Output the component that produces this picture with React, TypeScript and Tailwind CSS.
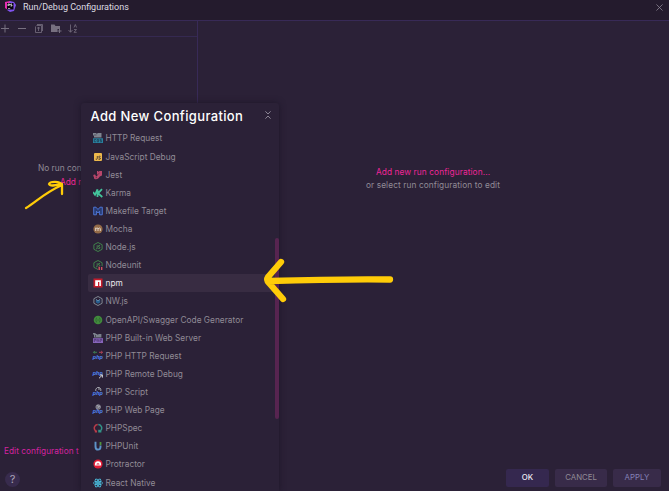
import React from 'react';

const svgBase = 'block h-[10px] w-[10px] shrink-0';

function Php({ children }: { children?: React.ReactNode }) {
  return (
    <svg viewBox="0 0 10 10" className={svgBase + ' overflow-visible'}>
      <text x="-0.2" y="8.4" fontSize="6.2" fontWeight="700" fontStyle="italic" letterSpacing="0" fontFamily="Roboto, sans-serif" fill="#4f80ea">php</text>
      {children}
    </svg>
  );
}

function Hexagon({ color, children }: { color: string; children?: React.ReactNode }) {
  return (
    <svg viewBox="0 0 10 10" className={svgBase}>
      <path d="M5 .5 9.1 2.7V7.3L5 9.5 .9 7.3V2.7Z" fill="none" stroke={color} strokeWidth=".9" />
      {children}
    </svg>
  );
}

const js = (
  <path d="M4.2 3.2V6.4Q4.2 7.1 3 6.8M7 3.5Q5.4 3 5.4 4.1T7 5.4Q7 7 5.2 6.5" fill="none" stroke="#4d9554" strokeWidth=".8" />
);

const items: { name: string; icon: React.ReactNode }[] = [
  {
    name: 'HTTP Request',
    icon: (
      <svg viewBox="0 0 10 10" className={svgBase}>
        <path d="M0 0H3.500V1H4.300V0H8.500V4.600H1V2.500H0Z" fill="#7f8590" />
        <path d="M1 2H3.5" stroke="#3b3447" strokeWidth=".6" />
        <path d="M0 5.3H10V10H0Z" fill="#29809f" />
        <path d="M3 6.5H1.3V8.8H3M4.2 8.8V6.5H5.5V8.8H4.2M8.5 6.5H7V7.6H8.5V8.8H7" fill="none" stroke="#20394e" strokeWidth=".7" />
      </svg>
    ),
  },
  {
    name: 'JavaScript Debug',
    icon: (
      <svg viewBox="0 0 10 10" className={svgBase}>
        <rect x="1" y="1" width="8" height="8" rx="1" fill="#edb84b" />
        <path d="M4.3 4V6.6Q4.3 7.7 2.7 7.1M7.5 4.4Q5.7 3.7 5.7 4.8T7.5 6.3Q7.5 7.8 5.4 7.1" fill="none" stroke="#43352f" strokeWidth=".9" />
      </svg>
    ),
  },
  {
    name: 'Jest',
    icon: (
      <svg viewBox="0 0 10 10" className={svgBase}>
        <path d="M4 1H5.2L5.7 2.2 6.3 1H9V4.8Q9 6.3 7 6.3L5.5 8.2Q4 9.5 2.2 9.2.5 8.8 1 7L2 5.7 3.2 6.6 4.9 5 4 4Z" fill="#b9466b" />
        <path d="M5.2 4.2 6.5 3.1M2.6 7.8 4 7.5" stroke="#472942" strokeWidth=".7" />
        <circle cx="1.5" cy="5.7" r="1.2" fill="#b9466b" />
      </svg>
    ),
  },
  {
    name: 'Karma',
    icon: (
      <svg viewBox="0 0 10 10" className={svgBase}>
        <path d="M0 4 2 6.8 4.5 1.4V9M9 1.2 5 5.3 9.3 9" fill="none" stroke="#43c49b" strokeWidth="1.8" />
      </svg>
    ),
  },
  {
    name: 'Makefile Target',
    icon: (
      <svg viewBox="0 0 10 10" className={svgBase}>
        <path d="M.7 1.2H3L5 3.5 7 1.2H9.3V8.8H6.6V5.2L5 7 3.4 5.2V8.8H.7Z" fill="#283b72" stroke="#507be0" strokeWidth=".9" />
      </svg>
    ),
  },
  {
    name: 'Mocha',
    icon: (
      <svg viewBox="0 0 10 10" className={svgBase}>
        <circle cx="5" cy="5" r="4.6" fill="#946b48" />
        <path d="M2.7 7V3.7M2.7 5Q3.6 3.1 5 4.4V7M5 5Q6.3 3.1 7.3 4.5V7" fill="none" stroke="#dfd1c5" strokeWidth="1" />
      </svg>
    ),
  },
  { name: 'Node.js', icon: <Hexagon color="#438b4e">{js}</Hexagon> },
  {
    name: 'Nodeunit',
    icon: (
      <Hexagon color="#438b4e">
        {js}
        <path d="M5 6.2H10V10H5Z" fill="#2b2137" />
        <path d="M6.2 6.8V10M8.7 7V10" stroke="#d3515f" strokeWidth="1.4" />
      </Hexagon>
    ),
  },
  {
    name: 'npm',
    icon: (
      <svg viewBox="0 0 10 10" className={svgBase}>
        <path d="M.5.5H9.5V9.5H.5Z" fill="#c51c2c" />
        <path d="M2.2 2.2H7.9V7.9H6.3V3.9H5V7.9H2.2Z" fill="#fff" />
      </svg>
    ),
  },
  {
    name: 'NW.js',
    icon: (
      <Hexagon color="#89939d">
        <path d="M2.8 3.2 5 4.2 7.2 3.2V6.4L5 7.8 2.8 6.4Z" fill="#275e8e" />
        <path d="M3 3.2 5 5 7 3.2" fill="none" stroke="#8fa8b9" strokeWidth=".6" />
      </Hexagon>
    ),
  },
  {
    name: 'OpenAPI/Swagger Code Generator',
    icon: (
      <svg viewBox="0 0 10 10" className={svgBase}>
        <circle cx="5" cy="5" r="4.3" fill="#418b3c" />
        <path d="M4 2.8Q3 2.8 3.2 4.2L2.5 5 3.2 5.8Q3 7.2 4 7.2M6 2.8Q7 2.8 6.8 4.2L7.5 5 6.8 5.8Q7 7.2 6 7.2M4.3 5H5.8" fill="none" stroke="#2c5a32" strokeWidth=".7" />
      </svg>
    ),
  },
  {
    name: 'PHP Built-in Web Server',
    icon: (
      <svg viewBox="0 0 10 10" className={svgBase}>
        <path d="M0 0H2.6V1H8.4V4.6H1V1.6H0Z" fill="#7b818b" />
        <path d="M2.5 2V4M4 1.4H5.5" stroke="#302840" strokeWidth=".6" />
        <path d="M0 5.2H10V10H0Z" fill="#8765ba" />
        <path d="M1.3 9V6.4H2.9V7.8M4.2 6V8.7M5.7 6.3V8.7M7.2 9V6.4H8.8V7.8" fill="none" stroke="#422d62" strokeWidth=".7" />
      </svg>
    ),
  },
  {
    name: 'PHP HTTP Request',
    icon: (
      <Php>
        <path d="M4 1.3H.6M1.8 0 .5 1.3 1.8 2.6" fill="none" stroke="#42955b" strokeWidth=".8" />
        <path d="M6 1.3H9.4M8.2 0 9.5 1.3 8.2 2.6" fill="none" stroke="#d14c60" strokeWidth=".8" />
      </Php>
    ),
  },
  {
    name: 'PHP Remote Debug',
    icon: (
      <svg viewBox="0 0 10 10" className={svgBase + ' overflow-visible'}>
        <text x="-.3" y="6.3" fontSize="6.2" fontWeight="700" fontStyle="italic" letterSpacing="0" fontFamily="Roboto, sans-serif" fill="#4f80ea">php</text>
        <path d="M6 9.3 9.4 6M7 6H9.4V8.6" fill="none" stroke="#d1d2d7" strokeWidth="1" />
      </svg>
    ),
  },
  {
    name: 'PHP Script',
    icon: <Php><path d="M2.8 4V2.1L4.3.5H6.5L7.8 2.1V4M5 2H7" fill="none" stroke="#a5a6ae" strokeWidth="1" /></Php>,
  },
  {
    name: 'PHP Web Page',
    icon: <Php><circle cx="5.2" cy="2" r="2.3" fill="#696876" stroke="#a2a2ad" strokeWidth=".7" /><path d="M4 .6 6.5 1.6 4.5 2.8" fill="none" stroke="#d0d0d4" strokeWidth=".6" /></Php>,
  },
  {
    name: 'PHPSpec',
    icon: (
      <svg viewBox="0 0 10 10" className={svgBase}>
        <path d="M4.7 1.4A3.7 3.7 0 0 0 2.4 7.7L3.8 8.5M1.8 8.7H4" fill="none" stroke="#b83c49" strokeWidth="1.5" />
        <path d="M5.3 1.4A3.7 3.7 0 0 1 7.6 7.7L6.2 8.5M6 6.7V8.8H8.4" fill="none" stroke="#329388" strokeWidth="1.5" />
      </svg>
    ),
  },
  {
    name: 'PHPUnit',
    icon: (
      <svg viewBox="0 0 10 10" className={svgBase}>
        <path d="M2.5.8V5.9Q2.6 8.6 5 8.6T7.5 6V4.5" fill="none" stroke="#5d93c8" strokeWidth="1.9" />
        <path d="M6.6 1H8.4V4.2H6.6Z" fill="#50943b" />
      </svg>
    ),
  },
  {
    name: 'Protractor',
    icon: (
      <svg viewBox="0 0 10 10" className={svgBase}>
        <circle cx="5" cy="5" r="4.6" fill="#e31c36" />
        <path d="M1.9 6.5V5.3A3.1 3.1 0 0 1 8.1 5.3V6.5Z" fill="#fff" />
        <path d="M3.4 5.4A1.7 1.7 0 0 1 6.6 5.4Z" fill="#d62a42" />
      </svg>
    ),
  },
  {
    name: 'React Native',
    icon: (
      <svg viewBox="0 0 10 10" className={svgBase} fill="none" stroke="#4bc4e5" strokeWidth=".8">
        <ellipse cx="5" cy="5" rx="4.6" ry="1.8" />
        <ellipse cx="5" cy="5" rx="4.6" ry="1.8" transform="rotate(60 5 5)" />
        <ellipse cx="5" cy="5" rx="4.6" ry="1.8" transform="rotate(120 5 5)" />
        <circle cx="5" cy="5" r=".8" fill="#4bc4e5" />
      </svg>
    ),
  },
];

function TitleBar() {
  return (
    <header className="flex h-5 shrink-0 items-start bg-[#241b2d] pl-[5px]">
      <svg viewBox="0 0 11 11" className="mt-[1px] h-[11px] w-[11px]">
        <path d="M0 1 5 0 6 5 3 9 0 7Z" fill="#e52cb1" />
        <path d="M5 0 9 1 11 4 9 10 5 11 2 9Z" fill="#8052ee" />
        <path d="M2 2H8.5V8.5H2Z" fill="#07050b" />
        <path d="M3 5V3H4.5V4.2H3M7 3H5.7V4H7V5H5.5" fill="none" stroke="#fff" strokeWidth=".7" />
        <path d="M3 7.5H5.2" stroke="#fff" strokeWidth=".6" />
      </svg>
      <h1 className="ml-[7px] mt-[1px] font-['Roboto',sans-serif] text-[9px] leading-3 tracking-[0px] text-[#dedbe2]">Run/Debug Configurations</h1>
      <svg viewBox="0 0 8 8" className="ml-auto mr-[6px] mt-[4px] h-[7px] w-[7px]"><path d="M.5.5 7.5 7.5M7.5.5.5 7.5" stroke="#8e8795" strokeWidth=".9" /></svg>
    </header>
  );
}

function Toolbar() {
  return (
    <div className="h-[16px] shrink-0 border-b border-[#352951]">
      <svg viewBox="0 0 80 16" className="-mt-px block h-4 w-20" fill="none" stroke="#777080">
        <path d="M1 8.5H9M5 4.5V12.5M18 8.5H26" />
        <path d="M36.5 5.5H41.5V12.5H35.5V6.5M37 4.5H42.5V11M37 8H40M38.5 7V11" strokeWidth=".8" />
        <path d="M51 4.5H54.500L55.500 6H60V9H57.500V12H51Z" fill="#777080" stroke="none" />
        <path d="M59.5 9V13M57.5 11H61.5" />
        <path d="M70.5 4.5V12M68.5 10 70.5 12.3 72.5 10M74 7.5 75.3 4.5 76.6 7.5M74 9.5H76.5L74 12.3H76.7" strokeWidth=".8" />
      </svg>
    </div>
  );
}

function ConfigurationPopup() {
  return (
    <section className="absolute bottom-0 left-[81px] top-[103px] w-[198px] overflow-hidden rounded-t-[3px] bg-[#2b2137] shadow-[0_0_6px_#1d1628]">
      <div className="flex h-[26px] items-center justify-between pl-[9.5px] pr-[8px]">
        <h2 className="text-[13px] font-medium leading-none tracking-[0.36px] text-white">Add New Configuration</h2>
        <svg viewBox="0 0 6 8" className="-mt-[3px] h-[8px] w-[6px]" fill="none" stroke="#9992a1" strokeWidth=".9"><path d="M.4.3 3 3 5.6.3M.4 7.7 3 5 5.6 7.7" /></svg>
      </div>
      <ul className="pt-[0.4px]">
        {items.map((item) => (
          <li
            key={item.name}
            className={
              'flex h-[18.12px] items-center rounded-l-[2px] pl-[5px] ml-[7px] mr-[4px] ' +
              (item.name === 'npm' ? 'bg-[#382c42] text-[#e9e6ed]' : 'text-[#918b96]')
            }
          >
            {item.icon}
            <span className="ml-[2.5px] whitespace-nowrap leading-[10px]">{item.name}</span>
          </li>
        ))}
      </ul>
      <div className="absolute right-0 top-[135px] h-[181px] w-[4px] rounded-full bg-[#572450]" />
    </section>
  );
}

const buttonBase = 'flex h-[18px] items-center justify-center rounded-[2px] text-[7.8px] tracking-[0px]';

export default function App() {
  return (
    <div className="relative flex h-[491px] w-[669px] flex-col overflow-hidden bg-[#2b2137] font-['Inter',sans-serif] text-[8.3px] tracking-[0.02px] text-[#918b96]">
      <TitleBar />
      <main className="flex min-h-0 flex-1 border-t border-[#382a57]">
        <aside className="flex w-[198px] shrink-0 flex-col border-r border-[#382a57]">
          <Toolbar />
          <div className="mt-[124px] w-[81px] overflow-hidden pl-[38px] leading-[14px]">
            <p className="whitespace-nowrap">No run con</p>
            <p className="whitespace-nowrap pl-[22px] text-[#ef2698]">Add r</p>
          </div>
          <p className="mt-auto mb-[14px] w-[81px] overflow-hidden pl-[4px] leading-[14px] whitespace-nowrap text-[#d323a0]">Edit configuration t</p>
          <div className="mb-[4px] ml-[5px] flex h-[15px] w-[15px] items-center justify-center rounded-full bg-[#382b4d] text-[11px] tracking-[0px] text-[#aaa4b5]">?</div>
        </aside>
        <div className="flex flex-1 flex-col">
          <div className="mt-[145px] pr-px text-center leading-[13px] tracking-[0.1px]">
            <p className="text-[#ef2698]">Add new run configuration...</p>
            <p>or select run configuration to edit</p>
          </div>
          <div className="mb-[4px] mt-auto flex justify-end gap-[6px] pr-[8px]">
            <button className={buttonBase + ' w-[43px] bg-[#35284f] font-medium text-[#f0edf4]'}>OK</button>
            <button className={buttonBase + ' w-[52px] bg-[#382b49]'}>CANCEL</button>
            <button className={buttonBase + ' w-[48px] bg-[#382b49] text-[#8480b5]'}>APPLY</button>
          </div>
        </div>
      </main>
      <ConfigurationPopup />
      <svg viewBox="0 0 669 491" className="pointer-events-none absolute inset-0 h-full w-full" fill="none" stroke="#ffcc08" strokeLinecap="round" strokeLinejoin="round">
        <path d="M26 208C35 203 44 193 62 185M62 194V184.500C60 181 50 181 49 184C50 187 57 185 62 184" strokeWidth="2.300" />
        <path d="M281 262 268 277Q266 280 269 283L283 299M269 281C303 280 342 279 390 279.500" strokeWidth="6.300" />
      </svg>
    </div>
  );
}
